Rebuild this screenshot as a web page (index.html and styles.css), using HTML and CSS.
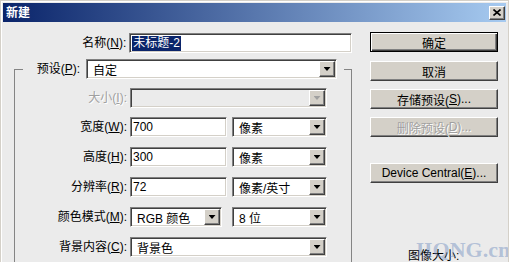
FILE: index.html
```html
<!DOCTYPE html>
<html lang="zh">
<head>
    <meta charset="UTF-8">
    <title>新建</title>
    <link rel="stylesheet" href="styles.css">
</head>
<body>
    <div class="window">
        <div class="titlebar">
            <span class="title">新建</span>
            <span class="close">
                <svg width="8" height="7" viewBox="0 0 8 7"><path d="M0.5 0.5 L7.5 6.5 M7.5 0.5 L0.5 6.5" stroke="#000" stroke-width="1.6" fill="none"/></svg>
            </span>
        </div>
        <div class="content">
            <div class="form">
                <div class="row name-row">
                    <label class="lbl">名称(<u>N</u>):</label>
                    <div class="field input name"><span class="sel">未标题-2</span></div>
                </div>
                <fieldset class="group">
                    <legend class="preset">
                        <label class="lbl">预设(<u>P</u>):</label>
                        <div class="field select preset-select"><span class="val">自定</span><i class="drop"></i></div>
                    </legend>
                    <div class="rows">
                        <div class="row first">
                            <label class="lbl disabled">大小(<u>I</u>):</label>
                            <div class="field select off w-full"><span class="val"></span><i class="drop"></i></div>
                        </div>
                        <div class="row">
                            <label class="lbl">宽度(<u>W</u>):</label>
                            <div class="field input w-input">700</div>
                            <div class="field select w-unit"><span class="val">像素</span><i class="drop"></i></div>
                        </div>
                        <div class="row">
                            <label class="lbl">高度(<u>H</u>):</label>
                            <div class="field input w-input">300</div>
                            <div class="field select w-unit"><span class="val">像素</span><i class="drop"></i></div>
                        </div>
                        <div class="row">
                            <label class="lbl">分辨率(<u>R</u>):</label>
                            <div class="field input w-input">72</div>
                            <div class="field select w-unit"><span class="val">像素/英寸</span><i class="drop"></i></div>
                        </div>
                        <div class="row">
                            <label class="lbl">颜色模式(<u>M</u>):</label>
                            <div class="field select w-color"><span class="val">RGB 颜色</span><i class="drop"></i></div>
                            <div class="field select w-unit wide-gap"><span class="val">8 位</span><i class="drop"></i></div>
                        </div>
                        <div class="row">
                            <label class="lbl">背景内容(<u>C</u>):</label>
                            <div class="field select w-full"><span class="val">背景色</span><i class="drop"></i></div>
                        </div>
                    </div>
                </fieldset>
            </div>
            <div class="buttons">
                <div class="btn default">确定</div>
                <div class="btn">取消</div>
                <div class="btn">存储预设(<u>S</u>)...</div>
                <div class="btn disabled">删除预设(<u>D</u>)...</div>
                <div class="btn device">Device Central(<u>E</u>)...</div>
                <div class="info">图像大小:</div>
            </div>
        </div>
        <div class="watermark">JIQNG.cn</div>
    </div>
</body>
</html>
```

FILE: styles.css
```css
body {
    margin: 0;
    font-family: "Liberation Sans", "Noto Sans CJK SC", sans-serif;
    font-size: 12px;
    color: #000;
}

.window {
    position: relative;
    width: 509px;
    height: 262px;
    box-sizing: border-box;
    background: #ebebeb;
    border: 1px solid #d4d0c8;
    border-bottom: none;
    box-shadow: inset 1px 1px #fff;
    padding: 2px 2px 0;
    overflow: hidden;
}

/* title bar */
.titlebar {
    height: 19px;
    display: flex;
    align-items: center;
    justify-content: space-between;
    background: linear-gradient(to right, #0a246a, #a6caf0);
    padding: 0 1px 0 3px;
}

.title {
    color: #fff;
    font-weight: bold;
    line-height: 14px;
}

.close {
    width: 16px;
    height: 14px;
    box-sizing: border-box;
    background: #d4d0c8;
    border: 1px solid;
    border-color: #fff #404040 #404040 #fff;
    box-shadow: inset -1px -1px #808080;
    display: flex;
    align-items: center;
    justify-content: center;
}

.close svg {
    display: block;
}

/* layout */
.content {
    display: flex;
    padding-top: 10px;
}

.form {
    width: 349px;
    padding-top: 1px;
}

.row {
    display: flex;
    align-items: center;
    height: 20px;
}

.lbl {
    text-align: right;
    margin-right: 3px;
    white-space: nowrap;
    line-height: 14px;
}

.name-row .lbl {
    width: 124px;
}

.disabled {
    color: #a0a0a0;
    text-shadow: 1px 1px #fff;
}

/* fields */
.field {
    height: 20px;
    box-sizing: border-box;
    background: #fff;
    border: 1px solid;
    border-color: #808080 #fff #fff #808080;
    box-shadow: inset 1px 1px #404040, inset -1px -1px #d4d0c8;
    display: flex;
    align-items: center;
    white-space: nowrap;
}

.input {
    padding-left: 2px;
}

.select {
    padding-left: 6px;
}

.select .val {
    flex: 1;
}

.name {
    width: 224px;
}

.sel {
    background: #0a246a;
    color: #fff;
    padding: 0 1px;
    line-height: 15px;
}

.drop {
    width: 16px;
    height: 16px;
    margin-right: 1px;
    box-sizing: border-box;
    background: #d4d0c8;
    border: 1px solid;
    border-color: #fff #404040 #404040 #fff;
    box-shadow: inset -1px -1px #808080;
    display: flex;
    align-items: center;
    justify-content: center;
}

.drop::after {
    content: "";
    width: 7px;
    height: 4px;
    background: #000;
    clip-path: polygon(0 0, 100% 0, 50% 100%);
}

.off {
    background: #ebebeb;
}

.off .drop::after {
    background: #a0a0a0;
}

/* group box */
.group {
    margin: 6px 0 0 11px;
    width: 338px;
    height: 260px;
    box-sizing: border-box;
    border: 1px solid #848484;
    border-bottom: none;
    padding: 0;
    min-width: 0;
}

.preset {
    display: flex;
    align-items: center;
    height: 20px;
    margin-left: 8px;
    padding: 0 7px 0 0;
}

.preset .lbl {
    width: 57px;
    margin-right: 6px;
}

.preset-select {
    width: 251px;
}

.rows {
    display: flex;
    flex-direction: column;
    gap: 10px;
    padding-top: 9px;
}

.rows .first {
    margin-bottom: -1px;
}

.rows .lbl {
    width: 112px;
}

.w-input {
    width: 97px;
}

.w-unit {
    width: 95px;
    margin-left: 5px;
}

.w-color {
    width: 92px;
}

.w-unit.wide-gap {
    margin-left: 10px;
}

.w-full {
    width: 197px;
}

/* right buttons */
.buttons {
    display: flex;
    flex-direction: column;
    margin-left: 18px;
    width: 128px;
}

.btn {
    height: 20px;
    box-sizing: border-box;
    background: #d4d0c8;
    border: 1px solid;
    border-color: #fff #404040 #404040 #fff;
    box-shadow: inset -1px -1px #808080;
    display: flex;
    align-items: center;
    justify-content: center;
    white-space: nowrap;
}

.btn + .btn {
    margin-top: 8px;
}

.btn.default {
    border-color: #000;
    box-shadow: inset 1px 1px #fff, inset -1px -1px #404040, inset -2px -2px #808080;
    margin-bottom: 1px;
}

.btn.device {
    margin-top: 26px;
}

.info {
    margin-top: 66px;
    padding-left: 38px;
    line-height: 14px;
}

.watermark {
    position: absolute;
    left: 412px;
    top: 236px;
    font-family: "Liberation Serif", serif;
    font-weight: bold;
    font-size: 22px;
    color: rgba(110, 140, 190, 0.45);
    white-space: nowrap;
}
```
